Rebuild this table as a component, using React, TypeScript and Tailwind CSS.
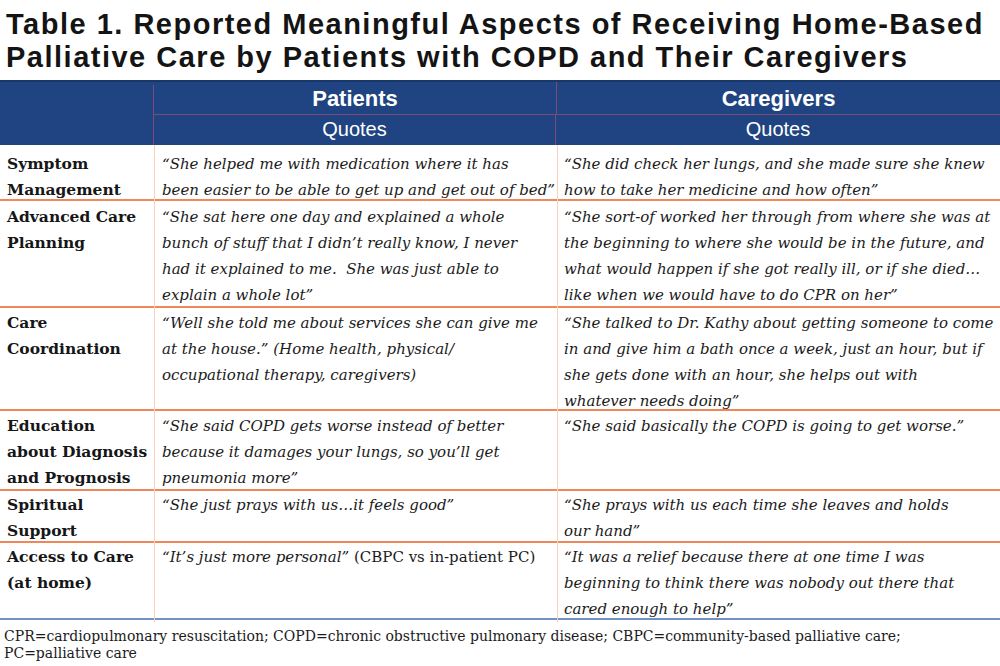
import React from 'react';

type Part = { t: string; roman?: boolean };
type Row = {
  label: string[];
  patients: Part[][];
  caregivers: Part[][];
  h: string;
  pt: string;
  last?: boolean;
};

const q = (...lines: string[]): Part[][] => lines.map((t) => [{ t }]);

const rows: Row[] = [
  {
    label: ['Symptom', 'Management'],
    patients: q(
      '\u201CShe helped me with medication where it has',
      'been easier to be able to get up and get out of bed\u201D'
    ),
    caregivers: q(
      '\u201CShe did check her lungs, and she made sure she knew',
      'how to take her medicine and how often\u201D'
    ),
    h: 'h-[56px]',
    pt: 'pt-[6px]',
  },
  {
    label: ['Advanced Care', 'Planning'],
    patients: q(
      '\u201CShe sat here one day and explained a whole',
      'bunch of stuff that I didn\u2019t really know, I never',
      'had it explained to me.\u00A0 She was just able to',
      'explain a whole lot\u201D'
    ),
    caregivers: q(
      '\u201CShe sort-of worked her through from where she was at',
      'the beginning to where she would be in the future, and',
      'what would happen if she got really ill, or if she died\u2026',
      'like when we would have to do CPR on her\u201D'
    ),
    h: 'h-[107px]',
    pt: 'pt-[3px]',
  },
  {
    label: ['Care', 'Coordination'],
    patients: q(
      '\u201CWell she told me about services she can give me',
      'at the house.\u201D (Home health, physical/',
      'occupational therapy, caregivers)'
    ),
    caregivers: q(
      '\u201CShe talked to Dr. Kathy about getting someone to come',
      'in and give him a bath once a week, just an hour, but if',
      'she gets done with an hour, she helps out with',
      'whatever needs doing\u201D'
    ),
    h: 'h-[103px]',
    pt: 'pt-[2px]',
  },
  {
    label: ['Education', 'about Diagnosis', 'and Prognosis'],
    patients: q(
      '\u201CShe said COPD gets worse instead of better',
      'because it damages your lungs, so you\u2019ll get',
      'pneumonia more\u201D'
    ),
    caregivers: q('\u201CShe said basically the COPD is going to get worse.\u201D'),
    h: 'h-[80px]',
    pt: 'pt-[2px]',
  },
  {
    label: ['Spiritual', 'Support'],
    patients: q('\u201CShe just prays with us\u2026it feels good\u201D'),
    caregivers: q(
      '\u201CShe prays with us each time she leaves and holds',
      'our hand\u201D'
    ),
    h: 'h-[52px]',
    pt: 'pt-[1px]',
  },
  {
    label: ['Access to Care', '(at home)'],
    patients: [
      [
        { t: '\u201CIt\u2019s just more personal\u201D' },
        { t: ' (CBPC vs in-patient PC)', roman: true },
      ],
    ],
    caregivers: q(
      '\u201CIt was a relief because there at one time I was',
      'beginning to think there was nobody out there that',
      'cared enough to help\u201D'
    ),
    h: 'h-[77px]',
    pt: 'pt-[1px]',
    last: true,
  },
];

function Quote({ lines }: { lines: Part[][] }) {
  return (
    <div className="italic text-[15px] leading-[26px] text-[#1b1b1b]">
      {lines.map((line, i) => (
        <div key={i} className="whitespace-nowrap">
          {line.map((p, j) => (
            <span key={j} className={p.roman ? 'not-italic' : ''}>
              {p.t}
            </span>
          ))}
        </div>
      ))}
    </div>
  );
}

export default function App() {
  return (
    <div className="w-[1000px] h-[666px] bg-white overflow-hidden font-['DejaVu_Serif',serif]">
      {/* Title */}
      <h1 className="pt-[8px] pl-[6px] font-['Liberation_Sans',Arial,sans-serif] font-bold text-[29px] leading-[33px] tracking-[1.5px] text-[#141414]">
        Table 1. Reported Meaningful Aspects of Receiving Home-Based
        <br />
        Palliative Care by Patients with COPD and Their Caregivers
      </h1>

      {/* Header */}
      <div className="mt-[6px] bg-[#1f4481] border-t-2 border-[#173868] text-white font-['Liberation_Sans',Arial,sans-serif] grid grid-cols-[154px_403px_1fr]">
        <div className="row-span-2 mt-[3px] border-r border-[#7a4c78]" />
        <div className="h-[32px] flex items-center justify-center font-bold text-[22px] border-r border-[#7a4c78]">
          Patients
        </div>
        <div className="h-[32px] flex items-center justify-center font-bold text-[22px]">
          Caregivers
        </div>
        <div className="col-span-2 grid grid-cols-[402px_1fr] border-t border-[#7a4c78]">
          <div className="h-[30px] pb-[2px] flex items-center justify-center text-[20px] border-r border-[#7a4c78]">
            Quotes
          </div>
          <div className="h-[30px] pb-[2px] flex items-center justify-center text-[20px]">
            Quotes
          </div>
        </div>
      </div>

      {/* Body */}
      <div>
        {rows.map((r, i) => (
          <div
            key={i}
            className={`grid grid-cols-[154px_403px_1fr] border-b-2 ${
              r.last ? 'border-[#7192c2]' : 'border-[#f0875a]'
            } ${r.h}`}
          >
            <div className={`pl-[7px] ${r.pt} font-bold text-[15.5px] leading-[26px] text-[#161616]`}>
              {r.label.map((l, j) => (
                <div key={j} className="whitespace-nowrap">
                  {l}
                </div>
              ))}
            </div>
            <div className={`border-l border-[#fbd3bb] pl-[7px] ${r.pt}`}>
              <Quote lines={r.patients} />
            </div>
            <div className={`border-l border-[#fbd3bb] pl-[6px] ${r.pt}`}>
              <Quote lines={r.caregivers} />
            </div>
          </div>
        ))}
      </div>

      {/* Footnote */}
      <div className="pt-[8px] pl-[4px] text-[14px] leading-[17px] text-[#1b1b1b]">
        CPR=cardiopulmonary resuscitation; COPD=chronic obstructive pulmonary disease; CBPC=community-based palliative care;
        <br />
        PC=palliative care
      </div>
    </div>
  );
}
